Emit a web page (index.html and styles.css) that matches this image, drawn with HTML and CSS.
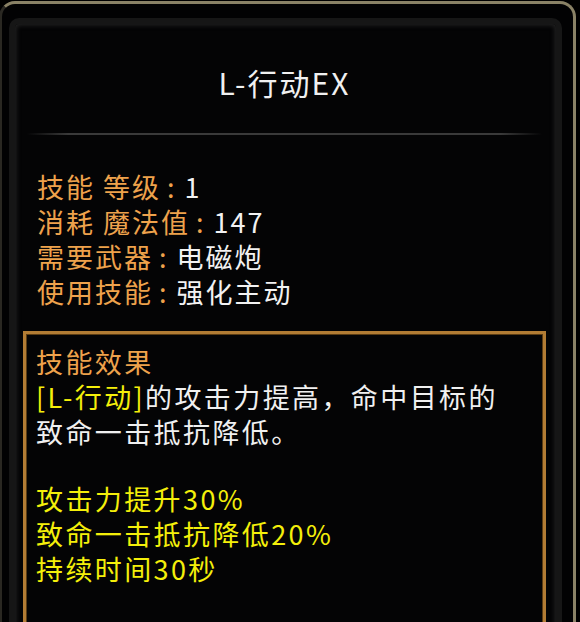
FILE: index.html
```html
<!DOCTYPE html>
<html lang="zh-CN">
<head>
  <meta charset="UTF-8">
  <title>L-行动EX</title>
  <link rel="stylesheet" href="styles.css">
</head>
<body>
  <div class="frame">
    <div class="panel">
      <div class="title">L-行动EX</div>
      <div class="divider"></div>

      <div class="stats">
        <div class="row"><span class="label">技能 等级</span><span class="colon">:</span><span class="value">1</span></div>
        <div class="row"><span class="label">消耗 魔法值</span><span class="colon">:</span><span class="value">147</span></div>
        <div class="row"><span class="label">需要武器</span><span class="colon">:</span><span class="value">电磁炮</span></div>
        <div class="row"><span class="label">使用技能</span><span class="colon">:</span><span class="value">强化主动</span></div>
      </div>

      <div class="effect">
        <div class="effect-title">技能效果</div>
        <div class="effect-desc"><span class="hl">[L-行动]</span>的攻击力提高，命中目标的<br>致命一击抵抗降低。</div>
        <div class="blank"></div>
        <div class="bonus">攻击力提升30%</div>
        <div class="bonus">致命一击抵抗降低20%</div>
        <div class="bonus">持续时间30秒</div>
      </div>
    </div>
  </div>
</body>
</html>
```

FILE: styles.css
```css
html, body {
  margin: 0;
  padding: 0;
  background-color: #000;
  overflow: hidden;
}
body {
  font-family: "Noto Sans CJK SC", "Noto Sans", sans-serif;
  height: 622px;
}
.frame {
  margin: 1px 4px 0 -1px;
  height: 640px;
  border: 3px solid #8a8266;
  border-bottom: none;
  border-left-color: #2a2822;
  border-radius: 16px 16px 0 0;
  background-color: #020203;
  padding: 14px 11px 0 7px;
}
.panel {
  height: 640px;
  border: 6px solid #161616;
  border-bottom: none;
  border-radius: 10px 10px 0 0;
  background-color: #040405;
  box-shadow: inset 0 0 5px 1px #262626;
  padding: 0 10px 0 8px;
}
.title {
  padding: 40px 0 33px;
  line-height: 36px;
  font-size: 30px;
  letter-spacing: 2px;
  color: #f0f0f0;
  text-align: center;
}
.divider {
  height: 2px;
  margin: 0 4px 0 4px;
  background: linear-gradient(to right, rgba(60,60,60,0) 0%, #3a3a3a 8%, #3a3a3a 92%, rgba(60,60,60,0) 100%);
}
.stats {
  padding: 34px 0 22px 14px;
  font-size: 27px;
  letter-spacing: 2px;
  line-height: 35px;
}
.row {
  white-space: nowrap;
}
.label, .colon {
  color: #eea24c;
}
.colon {
  margin: 0 8px 0 6px;
}
.value {
  color: #f2f2f2;
}
.effect {
  height: 400px;
  border: 3px solid #b27c34;
  box-shadow: inset 0 0 0 1px #5a3c14;
  padding: 10px 10px 0 10px;
  font-size: 27px;
  letter-spacing: 2.4px;
  line-height: 35px;
  white-space: nowrap;
}
.effect-title {
  color: #eea24c;
}
.effect-desc {
  color: #f0f0f0;
}
.hl, .bonus {
  color: #f4ef0a;
}
.blank {
  height: 32px;
}
```
